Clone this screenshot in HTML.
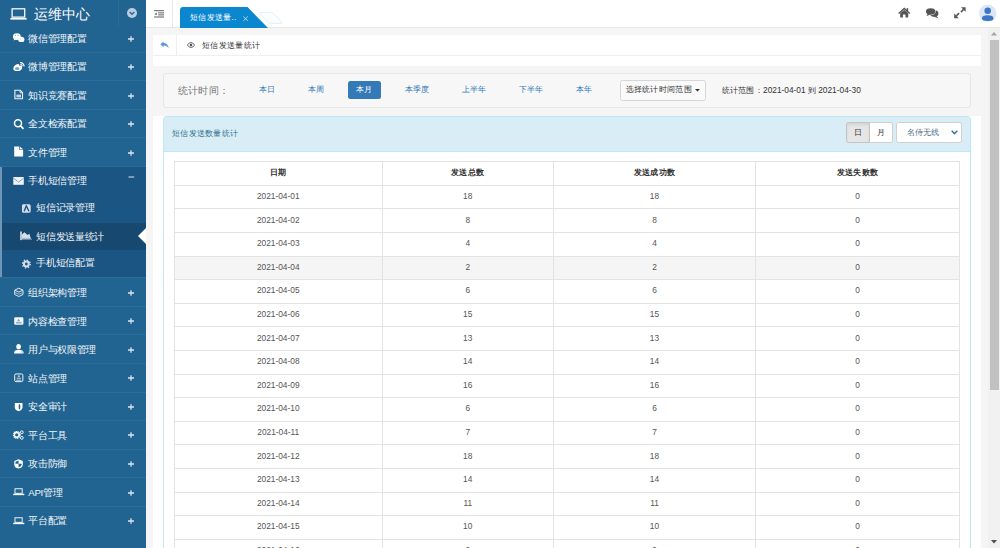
<!DOCTYPE html>
<html><head><meta charset="utf-8">
<style>
*{box-sizing:border-box;margin:0;padding:0}
html,body{width:1000px;height:548px;overflow:hidden;font-family:"Liberation Sans",sans-serif;background:#f5f5f5;position:relative}
.abs{position:absolute}
#side{position:absolute;left:0;top:0;width:146px;height:548px;background:#226491;color:#fff;overflow:hidden}
#side .expbg{position:absolute;left:0;width:146px;background:#1b5583;border-left:2px solid #6d96b9}
#side .dl{position:absolute;left:0;width:146px;height:1px;background:#2a6d9a}
#side .logo{position:absolute;left:0;top:0;width:146px;height:24px}
#side .row{position:absolute;left:0;width:146px;height:28.55px}

#side .t{position:absolute;left:28.3px;top:0.8px;line-height:28.55px;font-size:9.72px;letter-spacing:-0.35px;white-space:nowrap;color:#f2f6f9}

#side .ic{position:absolute;left:11.5px;top:8.5px;width:13px;height:12px}
#side .ic svg{display:block}

#side .pl{position:absolute;left:127px;top:10.9px;width:8px;height:8px}

#side .pl svg{display:block}
#side .sub{position:absolute;left:0;width:146px;height:27.6px}
#side .sub.act{background:#164870;left:2px;width:144px}
#side .sub .t{left:36.3px;line-height:27.6px}
#side .sic{position:absolute;left:22px;top:8.75px}
#side .sub.act .sic{left:18px}
#side .sub.act .t{left:34.3px}
#side .sic svg{display:block}
.tri{position:absolute;right:0;top:8.5px;width:0;height:0;border-top:8.3px solid transparent;border-bottom:8.3px solid transparent;border-right:8.5px solid #fff}
#top{position:absolute;left:146px;top:0;width:854px;height:28px;background:#fff;border-bottom:1px solid #e7e7e7}
.crumb{position:absolute;left:153px;top:35px;width:828px;height:31px;background:#fff}
.filter{position:absolute;left:163px;top:73px;width:807.5px;height:35.4px;background:#f7f7f7;border:1px solid #e6e6e6;border-radius:3px}
.lnk{position:absolute;font-size:8.33px;color:#337ab7;white-space:nowrap;line-height:12px}
.cj{letter-spacing:0.3px}
.wrap{position:absolute;left:153px;top:116px;width:828px;height:440px;background:#fff}
.panel{position:absolute;left:163px;top:116px;width:808px;height:440px;border:1px solid #bce8f1;border-radius:3px;background:#fff}
.ph{position:absolute;left:0;top:0;width:806px;height:34.5px;background:#d9edf7;border-bottom:1px solid #bce8f1}
table{position:absolute;left:174px;top:161.3px;border-collapse:collapse;width:785.5px;font-size:8.33px;color:#555;table-layout:fixed}
td span,th span{position:relative;top:-1.1px}
th span{letter-spacing:0.3px}
td,th{border:1px solid #e3e3e3;height:23.6px;text-align:center;padding:0;vertical-align:middle}
th{font-weight:bold;color:#333}
tr.hov td{background:#f5f5f5}
.sb{position:absolute;left:988px;top:28px;width:12px;height:520px;background:#f1f1f1}

</style></head><body>
<div id="side">
  <div class="logo">
    <svg class="abs" style="left:10px;top:8px" width="17" height="12" viewBox="0 0 17 12"><rect x="2.1" y="0.8" width="12.6" height="8.3" fill="none" stroke="#fff" stroke-width="1.25"/><rect x="0.4" y="9.9" width="16.2" height="1.7" fill="#fff"/></svg>
    <div class="abs" style="left:34px;top:5.3px;font-size:14px;line-height:18px;white-space:nowrap">运维中心</div>
    <div class="abs" style="left:118px;top:0;width:1px;height:27px;background:#2b6a97"></div>
    <svg class="abs" style="left:127.3px;top:8px" width="10" height="10" viewBox="0 0 10 10"><circle cx="5" cy="5" r="5" fill="#b9cde0"/><path d="M2.6 4 L5 6.3 L7.4 4" fill="none" stroke="#2a6a98" stroke-width="1.5"/></svg>
  </div>
<div class="expbg" style="top:166.9px;height:110.95px"></div>
<div class="row" style="top:23.75px"><span class="ic"><svg width="13" height="12" viewBox="0 0 13 12"><ellipse cx="4.85" cy="4.6" rx="3.95" ry="3.4" fill="#fff"/><path d="M2 6.8 L1.8 8.6 L4 7.6Z" fill="#fff"/><ellipse cx="9.25" cy="7.4" rx="3.15" ry="2.7" fill="#fff"/><path d="M10.6 9.5 L11.6 10.3 L11.3 8.9Z" fill="#fff"/><circle cx="3.4" cy="3.3" r="0.55" fill="#6d8fb0"/><circle cx="6.1" cy="3.3" r="0.55" fill="#6d8fb0"/><circle cx="8.2" cy="6.9" r="0.45" fill="#8aa8c2"/><circle cx="10.4" cy="6.9" r="0.45" fill="#8aa8c2"/></svg></span><span class="t">微信管理配置</span><span class="pl"><svg width="8" height="8" viewBox="0 0 8 8"><path d="M4 1.2V6.8M1 4H7" stroke="#d8e4ed" stroke-width="1.3"/></svg></span></div>
<div class="row" style="top:52.30px"><span class="ic"><svg width="13" height="12" viewBox="0 0 13 12"><path d="M1.3 7.4 Q1.3 5 4.2 3.6 Q6.6 2.5 7.2 3.6 Q7.5 4.2 7.2 4.8 Q9.6 4 10 5 Q10.3 5.7 10 6.2 Q10.3 9.9 5.6 10 Q1.3 10 1.3 7.4Z" fill="#fff"/><ellipse cx="5.2" cy="7.4" rx="2.2" ry="1.5" fill="#7e9fbb"/><path d="M8.1 1.6 A3.6 3.6 0 0 1 12 5.4" fill="none" stroke="#fff" stroke-width="1.3"/><path d="M8.3 3.3 A1.8 1.8 0 0 1 10.3 5.2" fill="none" stroke="#fff" stroke-width="1"/></svg></span><span class="t">微博管理配置</span><span class="pl"><svg width="8" height="8" viewBox="0 0 8 8"><path d="M4 1.2V6.8M1 4H7" stroke="#d8e4ed" stroke-width="1.3"/></svg></span></div>
<div class="row" style="top:80.85px"><span class="ic"><svg width="13" height="12" viewBox="0 0 13 12"><path d="M2.9 1.3 H8.2 L10.5 3.6 V9.8 H2.9Z" fill="none" stroke="#f2f5f8" stroke-width="1.1"/><rect x="4.4" y="5.6" width="4.6" height="2.8" fill="#c8d6e3"/><path d="M8 1.5 V3.8 H10.3" fill="none" stroke="#f2f5f8" stroke-width="0.8"/></svg></span><span class="t">知识竞赛配置</span><span class="pl"><svg width="8" height="8" viewBox="0 0 8 8"><path d="M4 1.2V6.8M1 4H7" stroke="#d8e4ed" stroke-width="1.3"/></svg></span></div>
<div class="row" style="top:109.40px"><span class="ic"><svg width="13" height="12" viewBox="0 0 13 12"><circle cx="6" cy="5.3" r="3.5" fill="none" stroke="#fff" stroke-width="1.5"/><path d="M8.5 7.8 L11 10.4" stroke="#fff" stroke-width="1.7" stroke-linecap="round"/></svg></span><span class="t">全文检索配置</span><span class="pl"><svg width="8" height="8" viewBox="0 0 8 8"><path d="M4 1.2V6.8M1 4H7" stroke="#d8e4ed" stroke-width="1.3"/></svg></span></div>
<div class="row" style="top:137.95px"><span class="ic"><svg width="13" height="12" viewBox="0 0 13 12"><path d="M2.2 0.45 H7.3 V3.85 H11.1 V10.55 H2.2Z" fill="#fff"/><path d="M8 0.7 L11 3.3 H8Z" fill="#fff"/></svg></span><span class="t">文件管理</span><span class="pl"><svg width="8" height="8" viewBox="0 0 8 8"><path d="M4 1.2V6.8M1 4H7" stroke="#d8e4ed" stroke-width="1.3"/></svg></span></div>
<div class="row exp" style="top:166.50px"><span class="ic"><svg width="13" height="12" viewBox="0 0 13 12"><rect x="1.3" y="2" width="10.5" height="7.8" fill="#eef3f7"/><path d="M1.5 3 L6.55 7.2 L11.6 3" fill="none" stroke="#7b9cb8" stroke-width="0.9"/></svg></span><span class="t">手机短信管理</span><span class="pl" style="top:6px"><svg width="8" height="8" viewBox="0 0 8 8"><path d="M1.5 4H7.2" stroke="#c9d8e4" stroke-width="1.1"/></svg></span></div>
<div class="sub" style="top:195.05px"><span class="sic"><svg width="10" height="10" viewBox="0 0 10 10"><rect x="-0.2" y="0.3" width="8.9" height="8.4" rx="1.6" fill="#d3dee8"/><path d="M2.2 7.3 L4.3 1.8 L6.9 7.3" fill="none" stroke="#1d5682" stroke-width="1.4" stroke-linejoin="round"/></svg></span><span class="t" style="top:-0.80px">短信记录管理</span></div>
<div class="sub act" style="top:222.65px"><span class="sic"><svg width="12" height="10" viewBox="0 0 12 10"><rect x="0.1" y="0.5" width="1.8" height="8.6" fill="#c5d3df"/><rect x="1.9" y="7.7" width="10" height="1.2" fill="#6f8ea8"/><path d="M1.9 7.7 V3.5 L4.4 1.2 L7.6 4.1 L9.4 2.8 L10.9 7.7Z" fill="#d3dee8"/></svg></span><span class="t" style="top:0.00px">短信发送量统计</span></div>
<div class="sub" style="top:250.25px"><span class="sic"><svg width="10" height="10" viewBox="0 0 10 10"><circle cx="4.35" cy="5" r="3.9" fill="none" stroke="#d3dee8" stroke-width="1.4" stroke-dasharray="1.4 1.66"/><circle cx="4.35" cy="5" r="2.4" fill="none" stroke="#d3dee8" stroke-width="2"/></svg></span><span class="t" style="top:-1.00px">手机短信配置</span></div>
<div class="row" style="top:277.85px"><span class="ic"><svg width="13" height="12" viewBox="0 0 13 12"><path d="M6.85 2.2 L11 4.2 V8.5 L6.85 10.5 L2.7 8.5 V4.2Z" fill="none" stroke="#dfe8ef" stroke-width="1"/><path d="M2.9 4.3 L6.85 6 L10.8 4.3" fill="none" stroke="#dfe8ef" stroke-width="1"/><path d="M3.2 6.6 L6.85 8.2 L10.5 6.6" fill="none" stroke="#c5d5e2" stroke-width="0.8"/></svg></span><span class="t" style="top:1.2px">组织架构管理</span><span class="pl"><svg width="8" height="8" viewBox="0 0 8 8"><path d="M4 1.2V6.8M1 4H7" stroke="#d8e4ed" stroke-width="1.3"/></svg></span></div>
<div class="row" style="top:306.40px"><span class="ic"><svg width="13" height="12" viewBox="0 0 13 12"><rect x="2.2" y="2.25" width="9.2" height="7.5" rx="1.2" fill="#f4f7fa"/><path d="M5.2 6.3 L6.6 3.8 L8 6.3Z" fill="#7c9cb8"/><rect x="4" y="6.9" width="5.6" height="0.9" fill="#7c9cb8"/><rect x="4" y="8.4" width="5.6" height="0.6" fill="#9fb6ca"/></svg></span><span class="t" style="top:1.2px">内容检查管理</span><span class="pl"><svg width="8" height="8" viewBox="0 0 8 8"><path d="M4 1.2V6.8M1 4H7" stroke="#d8e4ed" stroke-width="1.3"/></svg></span></div>
<div class="row" style="top:334.95px"><span class="ic"><svg width="13" height="12" viewBox="0 0 13 12"><ellipse cx="6.6" cy="3.8" rx="2.3" ry="2.7" fill="#fff"/><path d="M2.2 10.4 V9.2 Q2.2 7.2 4.8 6.9 H8.6 Q11.4 7.2 11.4 9.2 V10.4Z" fill="#fff"/><circle cx="10" cy="9" r="1.3" fill="#c9d8e5"/></svg></span><span class="t" style="top:1.2px">用户与权限管理</span><span class="pl"><svg width="8" height="8" viewBox="0 0 8 8"><path d="M4 1.2V6.8M1 4H7" stroke="#d8e4ed" stroke-width="1.3"/></svg></span></div>
<div class="row" style="top:363.50px"><span class="ic"><svg width="13" height="12" viewBox="0 0 13 12"><rect x="2.7" y="1.95" width="8.2" height="7.7" rx="1.3" fill="none" stroke="#eef3f7" stroke-width="1"/><ellipse cx="6.8" cy="4.1" rx="1.2" ry="0.7" fill="#fff"/><rect x="4.7" y="5.6" width="4.2" height="1.6" fill="#9db5c9"/><rect x="4.2" y="7.8" width="5.2" height="0.9" fill="#c0d2e0"/></svg></span><span class="t" style="top:1.2px">站点管理</span><span class="pl"><svg width="8" height="8" viewBox="0 0 8 8"><path d="M4 1.2V6.8M1 4H7" stroke="#d8e4ed" stroke-width="1.3"/></svg></span></div>
<div class="row" style="top:392.05px"><span class="ic"><svg width="13" height="12" viewBox="0 0 13 12"><path d="M2.8 1.9 H10.5 V6.2 Q10.5 9 6.65 10.3 Q2.8 9 2.8 6.2Z" fill="#fff"/><ellipse cx="7.5" cy="5.7" rx="0.85" ry="2.8" fill="#23628f"/></svg></span><span class="t" style="top:1.2px">安全审计</span><span class="pl"><svg width="8" height="8" viewBox="0 0 8 8"><path d="M4 1.2V6.8M1 4H7" stroke="#d8e4ed" stroke-width="1.3"/></svg></span></div>
<div class="row" style="top:420.60px"><span class="ic"><svg width="13" height="12" viewBox="0 0 13 12"><circle cx="4.75" cy="5.85" r="3" fill="none" stroke="#fff" stroke-width="1.9" stroke-dasharray="1.15 0.45"/><circle cx="4.75" cy="5.85" r="2.3" fill="none" stroke="#fff" stroke-width="1.2"/><circle cx="9.8" cy="3.25" r="1.4" fill="none" stroke="#f0f4f8" stroke-width="1"/><circle cx="9.8" cy="8.85" r="1.4" fill="none" stroke="#f0f4f8" stroke-width="1"/></svg></span><span class="t" style="top:1.2px">平台工具</span><span class="pl"><svg width="8" height="8" viewBox="0 0 8 8"><path d="M4 1.2V6.8M1 4H7" stroke="#d8e4ed" stroke-width="1.3"/></svg></span></div>
<div class="row" style="top:449.15px"><span class="ic"><svg width="13" height="12" viewBox="0 0 13 12"><path d="M6.55 1.2 L10.8 3 V6.4 Q10.8 9.6 6.55 10.5 Q2.3 9.6 2.3 6.4 V3Z" fill="#fff"/><path d="M6.55 2.6 V5.85 H3.5 V3.8Z" fill="#23628f"/><path d="M6.55 5.85 H9.6 V6.6 Q9.4 8.6 6.55 9.2Z" fill="#23628f"/></svg></span><span class="t" style="top:1.2px">攻击防御</span><span class="pl"><svg width="8" height="8" viewBox="0 0 8 8"><path d="M4 1.2V6.8M1 4H7" stroke="#d8e4ed" stroke-width="1.3"/></svg></span></div>
<div class="row" style="top:477.70px"><span class="ic"><svg width="13" height="12" viewBox="0 0 13 12"><rect x="3" y="2.75" width="7.2" height="4.6" fill="none" stroke="#e8eff5" stroke-width="1"/><rect x="1.2" y="7.75" width="11.1" height="1.4" fill="#fff"/></svg></span><span class="t" style="top:1.2px">API管理</span><span class="pl"><svg width="8" height="8" viewBox="0 0 8 8"><path d="M4 1.2V6.8M1 4H7" stroke="#d8e4ed" stroke-width="1.3"/></svg></span></div>
<div class="row" style="top:506.25px"><span class="ic"><svg width="13" height="12" viewBox="0 0 13 12"><rect x="3" y="2.75" width="7.2" height="4.6" fill="none" stroke="#e8eff5" stroke-width="1"/><rect x="1.2" y="7.75" width="11.1" height="1.4" fill="#fff"/></svg></span><span class="t" style="top:1.2px">平台配置</span><span class="pl"><svg width="8" height="8" viewBox="0 0 8 8"><path d="M4 1.2V6.8M1 4H7" stroke="#d8e4ed" stroke-width="1.3"/></svg></span></div>
<div class="dl" style="top:51.80px"></div>
<div class="dl" style="top:80.35px"></div>
<div class="dl" style="top:108.90px"></div>
<div class="dl" style="top:137.45px"></div>
<div class="dl" style="top:166.00px"></div>
<div class="dl" style="top:277.35px"></div>
<div class="dl" style="top:305.90px"></div>
<div class="dl" style="top:334.45px"></div>
<div class="dl" style="top:363.00px"></div>
<div class="dl" style="top:391.55px"></div>
<div class="dl" style="top:420.10px"></div>
<div class="dl" style="top:448.65px"></div>
<div class="dl" style="top:477.20px"></div>
<div class="dl" style="top:505.75px"></div>
  <div class="tri" style="top:227.7px"></div>
</div>
<div id="top">
  <svg class="abs" style="left:8px;top:9.5px" width="11" height="8" viewBox="0 0 11 8"><path d="M0.1 0.7H10M4.2 2.9H10M4.2 4.9H10M0.1 7H10" stroke="#555" stroke-width="0.95"/><path d="M0.4 3.9 L2.8 2.5 V5.3Z" fill="#666"/></svg>
  <div class="abs" style="left:26px;top:0;width:1px;height:27px;background:#e8e8e8"></div>
  <svg class="abs" style="left:33.5px;top:7px" width="90" height="21" viewBox="0 0 90 21"><path d="M0 21 V3 Q0 0 3 0 H67.5 L88 21Z" fill="#0b87cf"/></svg>
  <svg class="abs" style="left:112px;top:11px" width="26" height="14" viewBox="0 0 26 14"><path d="M2.2 1.5 H13.5 Q14.5 1.5 15.2 2.2 L23.8 11.2 Q24.5 12.4 23.2 12.4 H12 Q11 12.4 10.3 11.7 L1.5 2.7 Q0.9 1.5 2.2 1.5Z" fill="#fbfdff" stroke="#d9ebf8" stroke-width="0.8"/></svg>
  <div class="abs" style="left:44px;top:10.8px;font-size:8.33px;letter-spacing:0.3px;line-height:12px;color:#fff;white-space:nowrap">短信发送量..</div>
  <svg class="abs" style="left:97px;top:16px" width="6" height="6" viewBox="0 0 6 6"><path d="M0.4 0.6 L4.8 4.8 M4.8 0.6 L0.4 4.8" stroke="#d4e9f7" stroke-width="0.8"/></svg>
  <!-- right icons -->
  <svg class="abs" style="left:-146px;top:0" width="1000" height="28" viewBox="0 0 1000 28">
    <g fill="#555">
      <path d="M904.2 7.6 L910.2 12.9 L909.3 13.9 L904.2 9.4 L899.1 13.9 L898.2 12.9Z"/>
      <path d="M900.2 13.2 L904.2 9.9 L908.2 13.2 V17.4 H905.5 V14.6 H902.9 V17.4 H900.2Z"/>
      <rect x="906.6" y="8.2" width="1.6" height="3"/>
      <ellipse cx="934.2" cy="13.6" rx="4.2" ry="3.3"/>
      <path d="M936.2 15.8 L938.6 17.9 L934.6 16.9Z"/>
      <ellipse cx="930.6" cy="11.5" rx="5.1" ry="3.8" fill="#fff"/>
      <ellipse cx="930.6" cy="11.5" rx="4.6" ry="3.3"/>
      <path d="M927.8 13.8 L926.4 16.3 L930.2 14.6Z"/>
      <path d="M961 7.2 H965.6 V11.8Z"/>
      <path d="M954.2 13.6 V18.2 H958.8Z"/>
    </g>
    <path d="M963.6 9.4 L960.9 12.1 M956.3 15.9 L959.1 13.1" stroke="#555" stroke-width="1.5"/>
    <circle cx="987.7" cy="13.2" r="8.6" fill="#dce6f4"/>
    <circle cx="987.7" cy="10.8" r="3.3" fill="#3d77c6"/>
    <path d="M981.9 18.4 Q981.9 15.2 987.7 15.2 Q993.5 15.2 993.5 18.4 Q993.5 20.9 987.7 20.9 Q981.9 20.9 981.9 18.4Z" fill="#3d77c6"/>
  </svg>
</div>
<div class="crumb">
  <div class="abs" style="left:23px;top:0;width:1px;height:20px;background:#edf0f3"></div>
  <div class="abs" style="left:0;top:20px;width:828px;height:1px;background:#efefef"></div>
  <svg class="abs" style="left:7px;top:5.8px" width="9" height="8" viewBox="0 0 9 8"><path d="M0.3 3.2 L3.6 0.4 V2.1 Q8.2 2.1 8.6 7.6 Q7.2 4.7 3.6 4.6 V6.2Z" fill="#5b9bd5"/></svg>
  <svg class="abs" style="left:33.5px;top:6.5px" width="8" height="6" viewBox="0 0 8 6"><path d="M0.3 3 Q4 -1.8 7.7 3 Q4 7.8 0.3 3Z" fill="none" stroke="#555" stroke-width="0.9"/><circle cx="4" cy="3" r="1.3" fill="#555"/></svg>
  <div class="abs" style="left:49.1px;top:4px;font-size:8.33px;letter-spacing:0.3px;line-height:12px;color:#333;white-space:nowrap">短信发送量统计</div>
</div>
<div class="filter">
  <div class="abs" style="left:13.5px;top:9.8px;font-size:9.72px;letter-spacing:0.4px;line-height:14px;color:#777;white-space:nowrap">统计时间：</div>
</div>
<div class="lnk cj" style="left:259px;top:83px">本日</div>
<div class="lnk cj" style="left:307.5px;top:83px">本周</div>
<div class="abs" style="left:348px;top:80.5px;width:33px;height:18px;background:#337ab7;border-radius:2.5px"></div>
<div class="lnk cj" style="left:356px;top:83px;color:#fff">本月</div>
<div class="lnk cj" style="left:404.5px;top:83px">本季度</div>
<div class="lnk cj" style="left:461.5px;top:83px">上半年</div>
<div class="lnk cj" style="left:518.5px;top:83px">下半年</div>
<div class="lnk cj" style="left:575.5px;top:83px">本年</div>
<div class="abs" style="left:619.7px;top:80.3px;width:86.1px;height:20.7px;background:#fafafa;border:1px solid #d6d6d6;border-radius:2.5px"></div>
<div class="lnk cj" style="left:625.5px;top:82.9px;color:#333">选择统计时间范围</div>
<svg class="abs" style="left:695px;top:89.2px" width="5" height="3" viewBox="0 0 5 3"><path d="M0 0H5L2.5 2.6Z" fill="#333"/></svg>
<div class="lnk" style="left:721.5px;top:84px;color:#333"><span class="cj">统计范围：</span>2021-04-01 到 2021-04-30</div>
<div class="wrap"></div>
<div class="panel"><div class="ph"></div></div>
<div class="lnk cj" style="left:172px;top:126.5px;color:#31708f">短信发送数量统计</div>
<div class="abs" style="left:846.2px;top:122.2px;width:23.7px;height:20.4px;background:#e6e6e6;border:1px solid #c4c4c4;border-radius:2.5px 0 0 2.5px;box-shadow:inset 0 2px 3px rgba(0,0,0,.08)"></div>
<div class="abs" style="left:869.9px;top:122.2px;width:22.8px;height:20.4px;background:#fff;border:1px solid #d0d0d0;border-left:none;border-radius:0 2.5px 2.5px 0"></div>
<div class="lnk" style="left:854px;top:126px;color:#333">日</div>
<div class="lnk" style="left:876.5px;top:126px;color:#333">月</div>
<div class="abs" style="left:895.7px;top:122.2px;width:65.9px;height:20.4px;background:#fff;border:1px solid #d0d0d0;border-radius:2.5px"></div>
<div class="lnk cj" style="left:906.5px;top:126px;color:#4b6a80">名侍无线</div>
<svg class="abs" style="left:951px;top:130px" width="7" height="5" viewBox="0 0 7 5"><path d="M0.7 0.7 L3.5 3.7 L6.3 0.7" fill="none" stroke="#31708f" stroke-width="1.4"/></svg>
<table>
<colgroup><col style="width:207.5px"><col style="width:171.5px"><col style="width:202px"><col style="width:204px"></colgroup>
<tr><th><span>日期</span></th><th><span>发送总数</span></th><th><span>发送成功数</span></th><th><span>发送失败数</span></th></tr>
<tr><td><span>2021-04-01</span></td><td><span>18</span></td><td><span>18</span></td><td><span>0</span></td></tr>
<tr><td><span>2021-04-02</span></td><td><span>8</span></td><td><span>8</span></td><td><span>0</span></td></tr>
<tr><td><span>2021-04-03</span></td><td><span>4</span></td><td><span>4</span></td><td><span>0</span></td></tr>
<tr class="hov"><td><span>2021-04-04</span></td><td><span>2</span></td><td><span>2</span></td><td><span>0</span></td></tr>
<tr><td><span>2021-04-05</span></td><td><span>6</span></td><td><span>6</span></td><td><span>0</span></td></tr>
<tr><td><span>2021-04-06</span></td><td><span>15</span></td><td><span>15</span></td><td><span>0</span></td></tr>
<tr><td><span>2021-04-07</span></td><td><span>13</span></td><td><span>13</span></td><td><span>0</span></td></tr>
<tr><td><span>2021-04-08</span></td><td><span>14</span></td><td><span>14</span></td><td><span>0</span></td></tr>
<tr><td><span>2021-04-09</span></td><td><span>16</span></td><td><span>16</span></td><td><span>0</span></td></tr>
<tr><td><span>2021-04-10</span></td><td><span>6</span></td><td><span>6</span></td><td><span>0</span></td></tr>
<tr><td><span>2021-04-11</span></td><td><span>7</span></td><td><span>7</span></td><td><span>0</span></td></tr>
<tr><td><span>2021-04-12</span></td><td><span>18</span></td><td><span>18</span></td><td><span>0</span></td></tr>
<tr><td><span>2021-04-13</span></td><td><span>14</span></td><td><span>14</span></td><td><span>0</span></td></tr>
<tr><td><span>2021-04-14</span></td><td><span>11</span></td><td><span>11</span></td><td><span>0</span></td></tr>
<tr><td><span>2021-04-15</span></td><td><span>10</span></td><td><span>10</span></td><td><span>0</span></td></tr>
<tr><td><span>2021-04-16</span></td><td><span>9</span></td><td><span>9</span></td><td><span>0</span></td></tr>
</table>
<div class="sb">
  <svg class="abs" style="left:3px;top:4px" width="6" height="4" viewBox="0 0 6 4"><path d="M0 3.5H6L3 0Z" fill="#a3a3a3"/></svg>
  <div class="abs" style="left:1.5px;top:12px;width:9px;height:350px;background:#c1c1c1"></div>
  <svg class="abs" style="left:3px;top:512px" width="6" height="4" viewBox="0 0 6 4"><path d="M0 0H6L3 3.5Z" fill="#505050"/></svg>
</div>

</body></html>
